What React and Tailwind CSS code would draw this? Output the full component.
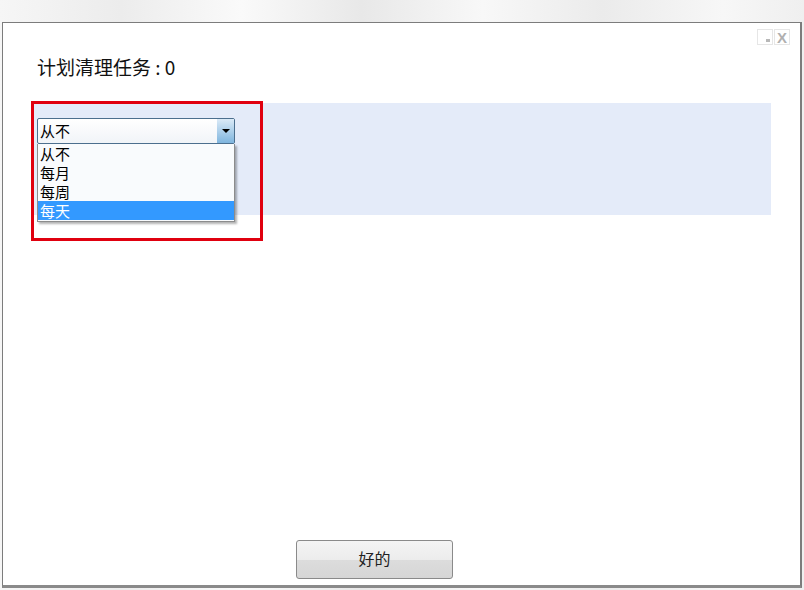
import React from 'react';

const font = { fontFamily: '"Noto Sans CJK SC", "Liberation Sans", sans-serif' };

const options = ['从不', '每月', '每周', '每天'];

export default function App() {
  return (
    <div className="w-[804px] h-[590px] bg-[linear-gradient(90deg,#f6f6f6_0%,#ececec_15%,#fafafa_30%,#e8e8e8_45%,#f8f8f8_60%,#ebebeb_75%,#f7f7f7_90%,#efefef_100%)] pt-[22px] pl-[2px] overflow-hidden" style={font}>
      {/* dialog */}
      <div className="w-[800px] h-[566px] bg-white border border-[#7c7c7c] border-b-[3px] border-b-[#8a8a8a] border-r-2 flex flex-col relative">
        {/* window buttons */}
        <div className="absolute top-[6px] right-[10px] flex gap-[1px]">
          <div className="w-[16px] h-[16px] border border-[#e6e6e6] flex items-end justify-end p-[2px]">
            <div className="w-[4px] h-[3px] bg-[#b8b8b8]" />
          </div>
          <div className="w-[16px] h-[16px] border border-[#e6e6e6] flex items-center justify-center text-[#b0b0b0] text-[15px] font-bold leading-none" style={{ fontFamily: '"Liberation Sans", sans-serif' }}>
            X
          </div>
        </div>

        {/* title */}
        <div className="pl-[34px] pt-[31px] text-[19px] leading-[26px] text-[#111]">
          计划清理任务 : 0
        </div>

        {/* blue panel */}
        <div className="relative mt-[23px] ml-[29px] w-[739px] h-[112px] bg-[#e4ebf9]">
          {/* red highlight */}
          <div className="absolute -left-[1px] -top-[2px] w-[232px] h-[140px] border-[3px] border-[#e0000f]" />

          {/* select */}
          <div className="absolute left-[5px] top-[15px] w-[198px]">
            <div className="h-[26px] border border-[#4c6f8e] rounded-[2px] bg-[linear-gradient(180deg,#ffffff,#f1f4f8)] flex items-center">
              <span className="flex-1 pl-[2px] text-[15px] leading-[20px] text-black">从不</span>
              <div className="w-[17px] h-[24px] bg-[linear-gradient(180deg,#dbeaf7,#7fb5de)] flex items-center justify-center">
                <div className="w-0 h-0 border-l-[4px] border-r-[4px] border-t-[4px] border-l-transparent border-r-transparent border-t-black" />
              </div>
            </div>
            <div className="border border-[#8c8c8c] border-t-0 bg-[#f9fbfd] shadow-[2px_2px_2px_rgba(0,0,0,0.3)] pb-[1px]">
              {options.map((o, i) => (
                <div
                  key={o}
                  className={
                    i === 3
                      ? 'h-[19px] pl-[2px] text-[15px] leading-[19px] bg-[#3399ff] text-white'
                      : 'h-[19px] pl-[2px] text-[15px] leading-[19px] text-black'
                  }
                >
                  {o}
                </div>
              ))}
            </div>
          </div>
        </div>

        <div className="flex-1" />

        {/* ok button */}
        <div className="flex pl-[293px] pb-[6px]">
          <button className="w-[157px] h-[39px] pb-[4px] rounded-[3px] border border-[#8a8a8a] bg-[linear-gradient(180deg,#f4f4f4_0%,#ececec_50%,#dcdcdc_52%,#d6d6d6_100%)] text-[16px] text-[#222]">
            好的
          </button>
        </div>
      </div>
    </div>
  );
}
